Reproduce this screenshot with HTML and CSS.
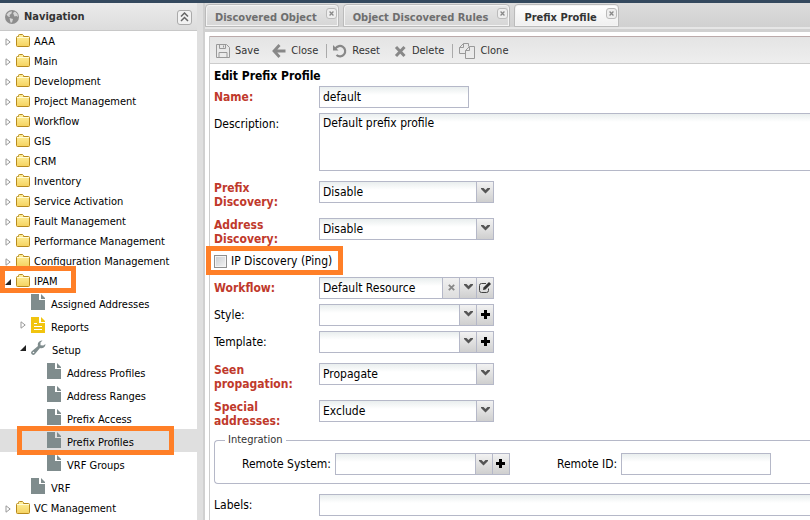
FILE: index.html
```
<!DOCTYPE html>
<html lang="en">
<head>
<meta charset="utf-8">
<title>Prefix Profile</title>
<link rel="stylesheet" href="styles.css">
</head>
<body>
<svg class="defs" aria-hidden="true">
  <defs>
    <linearGradient id="gold" x1="0" y1="0" x2="0" y2="1"><stop offset="0" stop-color="#fff2a0"/><stop offset="1" stop-color="#f5d260"/></linearGradient>
    <symbol id="folder" viewBox="0 0 14 13"><path d="M.5 11.500V3.500Q.5 2.500 1.500 2.500H2.500V1.500Q2.500.5 3.500.5H6.500L7.500 1.500V2.500H12.500Q13.500 2.500 13.500 3.500V11.500Q13.500 12.500 12.500 12.500H1.500Q.5 12.500.5 11.500Z" fill="url(#gold)" stroke="#b88a1c"/><path d="M1 3.500H13" stroke="#fffbd8"/></symbol>
    <symbol id="closed" viewBox="0 0 6 8"><path d="M1 .8 5.200 4 1 7.200Z" fill="#fff" stroke="#999"/></symbol>
    <symbol id="open" viewBox="0 0 6 6"><path d="M6 0V6H0Z" fill="#222"/></symbol>
    <symbol id="file" viewBox="0 0 14 16"><path d="M0 0H8V6H14V16H0ZM10 0 14 4V5H10Z" fill="#7f8c8d"/></symbol>
    <symbol id="report" viewBox="0 0 14 16"><path d="M0 0H8V6H14V16H0ZM10 0 14 4V5H10Z" fill="#f1c40f"/><path d="M3 6.500H6M3 9.500H11M3 12.500H11" stroke="#fff"/></symbol>
    <symbol id="wrench" viewBox="0 0 15 15"><path d="M14.500 4A4.200 4.200 0 0 1 9 8L3.800 14.200A2 2 0 0 1 .8 11.200L7 6A4.200 4.200 0 0 1 11.500.5L9.500 2.500V5.200L12.300 5.500Z" fill="#7f8c8d"/><circle cx="2.500" cy="12.500" r=".8" fill="#fff"/></symbol>
    <symbol id="down" viewBox="0 0 9 6"><path d="M0 0H2.500L4.500 2 6.500 0H9V1L4.500 5.500 0 1Z" fill="#555"/></symbol>
    <symbol id="plus" viewBox="0 0 9 9"><path d="M3 0H6V3H9V6H6V9H3V6H0V3H3Z" fill="#000"/></symbol>
    <symbol id="cross" viewBox="0 0 7 7"><path d="M.8.8 6.200 6.200M6.200.8.8 6.200" stroke="currentColor" stroke-width="1.800"/></symbol>
  </defs>
</svg>
<div class="topbar"></div>
<div class="app">
  <nav class="nav" aria-label="Navigation">
    <header class="nav-head">
      <svg class="globe" viewBox="0 0 14 14"><circle cx="7" cy="7" r="7" fill="#8d8d8d"/><path d="M1.500 4.500 4 2 7 1.200 6.500 3.500 4.500 5 5 7 3 6.500ZM8 3 10 1.500 12.500 4 13 7 11.500 6 9.500 6.500ZM4.500 8 8 9 7 12.500 5.500 12.500Z" fill="#d6d6d6"/></svg>
      <h1>Navigation</h1>
      <button class="collapse" aria-label="Collapse"><svg viewBox="0 0 9 10"><path d="M1 4.500 4.500 1 8 4.500M1 9 4.500 5.500 8 9" fill="none" stroke="#666" stroke-width="1.500"/></svg></button>
    </header>
    <ul class="tree">
      <li class="row"><svg class="arrow"><use href="#closed"/></svg><svg class="folder"><use href="#folder"/></svg>AAA</li>
      <li class="row"><svg class="arrow"><use href="#closed"/></svg><svg class="folder"><use href="#folder"/></svg>Main</li>
      <li class="row"><svg class="arrow"><use href="#closed"/></svg><svg class="folder"><use href="#folder"/></svg>Development</li>
      <li class="row"><svg class="arrow"><use href="#closed"/></svg><svg class="folder"><use href="#folder"/></svg>Project Management</li>
      <li class="row"><svg class="arrow"><use href="#closed"/></svg><svg class="folder"><use href="#folder"/></svg>Workflow</li>
      <li class="row"><svg class="arrow"><use href="#closed"/></svg><svg class="folder"><use href="#folder"/></svg>GIS</li>
      <li class="row"><svg class="arrow"><use href="#closed"/></svg><svg class="folder"><use href="#folder"/></svg>CRM</li>
      <li class="row"><svg class="arrow"><use href="#closed"/></svg><svg class="folder"><use href="#folder"/></svg>Inventory</li>
      <li class="row"><svg class="arrow"><use href="#closed"/></svg><svg class="folder"><use href="#folder"/></svg>Service Activation</li>
      <li class="row"><svg class="arrow"><use href="#closed"/></svg><svg class="folder"><use href="#folder"/></svg>Fault Management</li>
      <li class="row"><svg class="arrow"><use href="#closed"/></svg><svg class="folder"><use href="#folder"/></svg>Performance Management</li>
      <li class="row"><svg class="arrow"><use href="#closed"/></svg><svg class="folder"><use href="#folder"/></svg>Configuration Management</li>
      <li class="row"><svg class="arrow open"><use href="#open"/></svg><svg class="folder"><use href="#folder"/></svg>IPAM<span class="mark mark-ipam"></span></li>
      <li class="row leaf l1"><svg class="file"><use href="#file"/></svg>Assigned Addresses</li>
      <li class="row leaf l1"><svg class="arrow"><use href="#closed"/></svg><svg class="file"><use href="#report"/></svg>Reports</li>
      <li class="row leaf l1"><svg class="arrow open"><use href="#open"/></svg><svg class="wrench"><use href="#wrench"/></svg>Setup</li>
      <li class="row leaf l2"><svg class="file"><use href="#file"/></svg>Address Profiles</li>
      <li class="row leaf l2"><svg class="file"><use href="#file"/></svg>Address Ranges</li>
      <li class="row leaf l2"><svg class="file"><use href="#file"/></svg>Prefix Access</li>
      <li class="row leaf l2 selected"><svg class="file"><use href="#file"/></svg>Prefix Profiles<span class="mark mark-profiles"></span></li>
      <li class="row leaf l2"><svg class="file"><use href="#file"/></svg>VRF Groups</li>
      <li class="row leaf l1"><svg class="file"><use href="#file"/></svg>VRF</li>
      <li class="row"><svg class="arrow"><use href="#closed"/></svg><svg class="folder"><use href="#folder"/></svg>VC Management</li>
    </ul>
  </nav>
  <main class="main">
    <div class="tabs">
      <div class="tab"><span>Discovered Object</span><button aria-label="Close tab"><svg viewBox="0 0 7 7"><use href="#cross"/></svg></button></div>
      <div class="tab"><span>Object Discovered Rules</span><button aria-label="Close tab"><svg viewBox="0 0 7 7"><use href="#cross"/></svg></button></div>
      <div class="tab active"><span>Prefix Profile</span><button aria-label="Close tab"><svg viewBox="0 0 7 7"><use href="#cross"/></svg></button></div>
    </div>
    <div class="panel">
      <div class="toolbar">
        <button><svg viewBox="0 0 14 14"><path d="M.5.5H10.500L13.500 3.500V13.500H.5ZM3.500.5V4.500H9.500V.5M3 13.500V8.500H11V13.500M7.500 1.500V3.500" fill="none" stroke="#999"/></svg>Save</button>
        <button class="b-close"><svg viewBox="0 0 14 14"><path d="M7.500 1 2 7 7.500 13M2.500 7H13.500" fill="none" stroke="#888" stroke-width="2.800"/></svg>Close</button>
        <i class="sep"></i>
        <button><svg viewBox="0 0 14 14"><path d="M2.500 4.500A5.200 5.200 0 1 1 3.500 11" fill="none" stroke="#888" stroke-width="2.200"/><path d="M0 1V6.500H5.500Z" fill="#888"/></svg>Reset</button>
        <button class="b-delete"><svg viewBox="0 0 14 14"><path d="M3 3 11.500 12M11.500 3 3 12" stroke="#888" stroke-width="3"/></svg>Delete</button>
        <i class="sep"></i>
        <button class="b-clone"><svg class="wide" viewBox="0 0 16 16"><path d="M6.500 10.500H.5V4.500L4.500.5H9.500V3.500M4.500.5V4.500H.5M10.500 3.500H15.500V15.500H6.500V7.500ZM10.500 3.500V7.500H6.500" fill="none" stroke="#999"/></svg>Clone</button>
      </div>
      <form class="form">
        <h2>Edit Prefix Profile</h2>
        <div class="field req"><label for="name">Name:</label><input class="box w150" id="name" type="text" value="default"></div>
        <div class="field"><label for="desc">Description:</label><textarea class="box area" id="desc">Default prefix profile</textarea></div>
        <div class="field req two"><label for="pd">Prefix Discovery:</label>
          <div class="combo"><select class="box" id="pd"><option>Disable</option></select><span class="trig"><svg class="down"><use href="#down"/></svg></span></div></div>
        <div class="field req two"><label for="ad">Address Discovery:</label>
          <div class="combo"><select class="box" id="ad"><option>Disable</option></select><span class="trig"><svg class="down"><use href="#down"/></svg></span></div></div>
        <div class="check"><input type="checkbox" id="ping"><label for="ping">IP Discovery (Ping)</label><span class="mark mark-ping"></span></div>
        <div class="field req"><label for="wf">Workflow:</label>
          <div class="combo"><select class="box" id="wf"><option>Default Resource</option></select><button type="button" class="trig clear" aria-label="Clear"><svg class="x"><use href="#cross"/></svg></button><span class="trig"><svg class="down"><use href="#down"/></svg></span><button type="button" class="trig" aria-label="Edit"><svg class="edit" viewBox="0 0 12 11"><path d="M9.500 6.500V8.500Q9.500 10.500 7.500 10.500H2.500Q.5 10.500.5 8.500V3.500Q.5 1.500 2.500 1.500H7" fill="none" stroke="#444"/><path d="M4 8 4.500 5.500 10 0 12 2 6.500 7.500Z" fill="#333"/></svg></button></div></div>
        <div class="field"><label for="st">Style:</label>
          <div class="combo"><select class="box" id="st"><option></option></select><span class="trig"><svg class="down"><use href="#down"/></svg></span><button type="button" class="trig" aria-label="Add style"><svg class="plus"><use href="#plus"/></svg></button></div></div>
        <div class="field"><label for="tp">Template:</label>
          <div class="combo"><select class="box" id="tp"><option></option></select><span class="trig"><svg class="down"><use href="#down"/></svg></span><button type="button" class="trig" aria-label="Add template"><svg class="plus"><use href="#plus"/></svg></button></div></div>
        <div class="field req two"><label for="sp">Seen propagation:</label>
          <div class="combo"><select class="box" id="sp"><option>Propagate</option></select><span class="trig"><svg class="down"><use href="#down"/></svg></span></div></div>
        <div class="field req two"><label for="sa">Special addresses:</label>
          <div class="combo"><select class="box" id="sa"><option>Exclude</option></select><span class="trig"><svg class="down"><use href="#down"/></svg></span></div></div>
        <fieldset>
          <legend>Integration</legend>
          <div class="pair">
            <label for="rs">Remote System:</label>
            <div class="combo"><select class="box" id="rs"><option></option></select><span class="trig"><svg class="down"><use href="#down"/></svg></span><button type="button" class="trig" aria-label="Add remote system"><svg class="plus"><use href="#plus"/></svg></button></div>
            <label class="rid" for="ri">Remote ID:</label><input class="box w150" id="ri" type="text">
          </div>
        </fieldset>
        <div class="field last"><label for="lb">Labels:</label><input class="box wide-box" id="lb" type="text"></div>
      </form>
    </div>
  </main>
</div>
</body>
</html>
```
FILE: styles.css
```
* { box-sizing: border-box; }
body {
  margin: 0;
  min-height: 100vh;
  display: flex;
  flex-direction: column;
  background: #fff;
  color: #000;
  font: 11px/14px "DejaVu Sans Condensed", "DejaVu Sans", sans-serif;
}
button, input, select, textarea { font: inherit; color: inherit; margin: 0; }
button { border: 0; background: none; padding: 0; display: flex; align-items: center; justify-content: center; }
svg { display: block; flex: none; }
.defs { position: absolute; width: 0; height: 0; }
.topbar { height: 3px; background: #34495e; }
.app { flex: 1; display: grid; grid-template-columns: 203px minmax(0, 1fr); }

.nav { border-right: 6px solid #dfdfdf; }
.nav-head {
  height: 28px;
  display: flex;
  align-items: center;
  gap: 5px;
  padding: 1px 5px 0;
  background: linear-gradient(#ebebeb, #dcdcdc);
  border-bottom: 1px solid #c8c8c8;
}
.globe { width: 14px; height: 14px; }
h1 { flex: 1; margin: 0; font-size: 11px; color: #333; }
.collapse { width: 15px; height: 15px; border: 1px solid #aaa; border-radius: 3px; background: #f2f2f2; }
.collapse svg { width: 9px; height: 10px; }
.tree { list-style: none; margin: 0; padding: 0; }
.row { position: relative; height: 20px; display: flex; align-items: center; padding: 2px 0 0 5px; }
.arrow { width: 6px; height: 8px; margin-right: 5px; }
.arrow.open { height: 6px; }
.folder { width: 14px; height: 13px; margin: 0 4px 4px 0; }
.leaf { height: 23px; padding-top: 4px; }
.l1 { padding-left: 31px; }
.l2 { padding-left: 47px; }
.l1 .arrow { margin: 0 5px 6px -11px; }
.file { width: 14px; height: 16px; margin: 0 6px 6px 0; }
.wrench { width: 15px; height: 15px; margin: 0 6px 6px 0; }
.selected { background: #dfdfdf; }
.mark { position: absolute; border: 5px solid #ff7f27; pointer-events: none; }
.mark-ipam { left: 0; top: -5px; width: 76px; height: 27px; }
.mark-profiles { left: 17px; top: -3px; width: 157px; height: 29px; }
.mark-ping { left: -8px; top: -4px; width: 137px; height: 29px; }

.main { border-left: 2px solid #d0d0d0; display: flex; flex-direction: column; }
.tabs {
  height: 29px;
  display: flex;
  gap: 4px;
  padding-top: 1px;
  background: linear-gradient(#dcdcdc, #cfcfcf);
  border-bottom: 3px solid #d0d0d0;
  box-shadow: inset 0 -2px #e6e6e6;
}
.tab {
  height: 23px;
  display: flex;
  align-items: flex-start;
  gap: 9px;
  padding: 0 1px 0 9px;
  border: 1px solid #bbb;
  border-radius: 4px 4px 0 0;
  box-shadow: inset 0 0 0 1px #f4f4f4;
  background: linear-gradient(#e6e6e6, #d6d6d6);
  color: #6e6e6e;
  font-weight: bold;
}
.tab span { padding-top: 6px; }
.tab button { margin-top: 3px; width: 11px; height: 11px; border: 1px solid #bbb; border-radius: 3px; background: #eee; color: #888; }
.tab button svg { width: 5px; height: 5px; }
.active { background: linear-gradient(#fff, #efefef); color: #333; }

.panel { flex: 1; margin: 4px 0 0 4px; border-left: 1px solid #ccc; }
.toolbar {
  height: 28px;
  display: flex;
  align-items: center;
  padding: 1px 0 0 6px;
  background: linear-gradient(#e4e4e4, #eee);
  border-top: 1px solid #bbaaaa;
  border-bottom: 1px solid #ccc;
  color: #333;
}
.toolbar button { gap: 5px; margin-right: 13px; }
.toolbar svg { width: 14px; height: 14px; }
.toolbar .wide { width: 16px; height: 16px; }
.toolbar .b-close { margin-right: 8px; }
.toolbar .b-delete { margin-right: 8px; }
.sep { width: 1px; height: 14px; margin-right: 6px; background: #aaa; }

.form { display: flex; flex-direction: column; gap: 5px; padding: 5px 0 0 4px; font-size: 12px; }
h2 { margin: 0 0 -2px; font-size: 12px; line-height: 14px; color: #000; }
.field { display: grid; grid-template-columns: 105px minmax(0, 1fr); align-items: start; line-height: 14px; }
.field > label { padding-top: 4px; }
.req > label { font-weight: bold; color: #c0392b; }
.two { height: 32px; padding-top: 5px; }
.two > label { padding: 0 20px 0 0; }
.box {
  height: 22px;
  padding: 0 3px;
  border: 1px solid #b5b8c8;
  border-radius: 0;
  background: linear-gradient(#e9eeee, #fff 8px);
  outline: 0;
  color: #000;
}
.w150 { width: 150px; }
.area { height: 58px; width: 100%; padding: 2px 3px; border-right: 0; resize: none; display: block; }
.wide-box { width: 100%; border-right: 0; }
.combo { display: flex; width: 175px; }
.combo select { flex: 1; min-width: 0; appearance: none; border-right: 0; }
.trig {
  width: 17px;
  height: 22px;
  display: flex;
  align-items: center;
  justify-content: center;
  padding-bottom: 2px;
  border: 1px solid #b5b8c8;
  border-right: 0;
  background: linear-gradient(#f2f2f2, #cfcfcf);
}
.trig:last-child { width: 18px; border-right: 1px solid #b5b8c8; }
.clear { background: linear-gradient(#f0f0f0, #dedede); color: #888; }
.down { width: 9px; height: 6px; }
.plus { width: 9px; height: 9px; }
.x { width: 7px; height: 7px; }
.edit { width: 12px; height: 11px; }
.check { position: relative; align-self: start; height: 22px; display: flex; align-items: center; gap: 4px; }
.check input {
  appearance: none;
  width: 13px;
  height: 13px;
  border: 1px solid #8e8f8f;
  box-shadow: inset 0 0 0 1px #f4f4f4;
  background: linear-gradient(135deg, #c8ccd0, #f4f4f4);
}
fieldset { margin: 0; padding: 5px 0 8px 27px; min-width: 0; border: 1px solid #b5b8c8; border-right: 0; border-radius: 4px 0 0 4px; }
legend { margin-left: -17px; padding: 0 3px; font-size: 11px; line-height: 16px; color: #333; }
.pair { display: flex; align-items: center; gap: 4px; }
.rid { margin-left: 43px; }
.last { padding-top: 5px; }
```
